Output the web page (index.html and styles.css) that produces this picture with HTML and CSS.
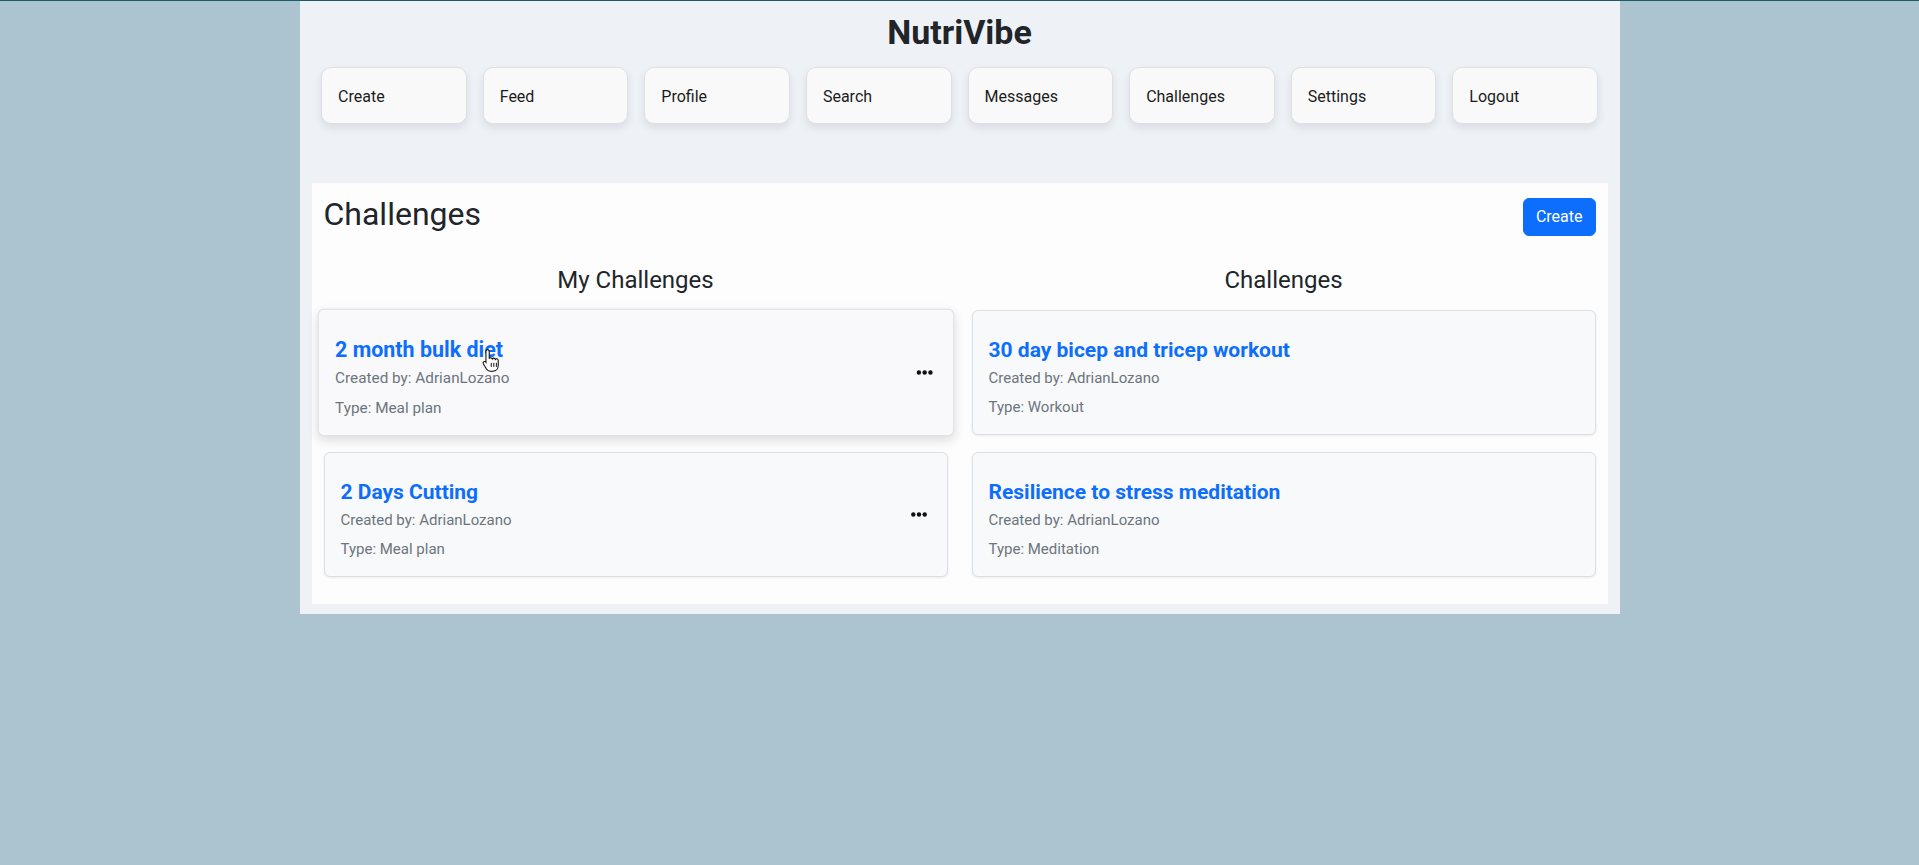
FILE: index.html
```html
<!DOCTYPE html>
<html lang="en">
<head>
<meta charset="utf-8">
<title>NutriVibe - Challenges</title>
<link rel="stylesheet" href="styles.css">
</head>
<body>
<div class="app">
  <h1 class="brand">NutriVibe</h1>
  <nav class="nav">
    <a class="nav-btn">Create</a>
    <a class="nav-btn">Feed</a>
    <a class="nav-btn">Profile</a>
    <a class="nav-btn">Search</a>
    <a class="nav-btn">Messages</a>
    <a class="nav-btn">Challenges</a>
    <a class="nav-btn">Settings</a>
    <a class="nav-btn">Logout</a>
  </nav>
  <main class="panel">
    <div class="panel-head">
      <h2 class="panel-title">Challenges</h2>
      <button class="btn-create">Create</button>
    </div>
    <div class="cols">
      <section class="col">
        <h4 class="col-title">My Challenges</h4>
        <div class="ch-card is-hover">
          <div class="ch-info">
            <h5 class="ch-name">2 month bulk diet</h5>
            <p class="ch-meta gap">Created by: AdrianLozano</p>
            <p class="ch-meta">Type: Meal plan</p>
          </div>
          <span class="dots"><svg width="16" height="5" viewBox="0 0 16 5"><circle cx="2.3" cy="2.5" r="2.2"/><circle cx="8" cy="2.5" r="2.2"/><circle cx="13.7" cy="2.5" r="2.2"/></svg></span>
          <svg class="cursor" width="18" height="24" viewBox="0 0 18 24"><path d="M5.5 1.2c.9 0 1.6.7 1.6 1.6v7.1c.3-.6.9-.9 1.5-.9.8 0 1.4.5 1.5 1.2.3-.5.8-.8 1.4-.8.8 0 1.4.6 1.5 1.3.3-.4.8-.6 1.3-.6.9 0 1.6.7 1.6 1.6v4.9c0 3.2-2.2 5.6-5.3 5.6H8.2c-1.7 0-2.9-.8-3.8-2.2L1.3 14.9c-.4-.7-.2-1.6.5-2 .6-.4 1.4-.2 1.9.3l.2.3V2.8c0-.9.7-1.6 1.6-1.6z" fill="#fff" stroke="#000" stroke-width="1"/><path d="M9.1 14v4M11.6 14v4M14.1 14v4" stroke="#000" stroke-width="0.9"/></svg>
        </div>
        <div class="ch-card">
          <div class="ch-info">
            <h5 class="ch-name">2 Days Cutting</h5>
            <p class="ch-meta gap">Created by: AdrianLozano</p>
            <p class="ch-meta">Type: Meal plan</p>
          </div>
          <span class="dots"><svg width="16" height="5" viewBox="0 0 16 5"><circle cx="2.3" cy="2.5" r="2.2"/><circle cx="8" cy="2.5" r="2.2"/><circle cx="13.7" cy="2.5" r="2.2"/></svg></span>
        </div>
      </section>
      <section class="col">
        <h4 class="col-title">Challenges</h4>
        <div class="ch-card">
          <div class="ch-info">
            <h5 class="ch-name">30 day bicep and tricep workout</h5>
            <p class="ch-meta gap">Created by: AdrianLozano</p>
            <p class="ch-meta">Type: Workout</p>
          </div>
        </div>
        <div class="ch-card">
          <div class="ch-info">
            <h5 class="ch-name">Resilience to stress meditation</h5>
            <p class="ch-meta gap">Created by: AdrianLozano</p>
            <p class="ch-meta">Type: Meditation</p>
          </div>
        </div>
      </section>
    </div>
  </main>
</div>
</body>
</html>
```
FILE: styles.css
```css
* { box-sizing: border-box; }

html, body { height: 100%; }

body {
  margin: 0;
  background: #abc4cf;
  border-top: 1px solid #1d5c67;
  font-family: Roboto, "Noto Sans", "Liberation Sans", sans-serif;
  color: #212529;
}

.app {
  width: 1320px;
  margin: 0 auto;
  background: #eef2f6;
  padding: 12px 0 10px;
}

.brand {
  margin: 0;
  text-align: center;
  font-size: 34px;
  line-height: 38.4px;
  font-weight: 700;
  color: #212529;
}

.nav {
  display: flex;
  padding: 0 13.6px;
  margin-top: 16px;
}

.nav-btn {
  flex: 1;
  margin: 0 8px;
  height: 57px;
  display: flex;
  align-items: center;
  padding: 2px 16px 0;
  background: #f9f9f9;
  border: 1px solid #dde1e5;
  border-radius: 10px;
  box-shadow: 0 4px 8px rgba(0, 0, 0, 0.09);
  font-size: 16px;
  line-height: 24px;
  color: #1c1c1c;
  text-decoration: none;
}

.panel {
  margin: 59px 12px 0;
  background: #fdfdfe;
  padding: 12px 0 10px;
}

.panel-head {
  display: flex;
  justify-content: space-between;
  align-items: flex-start;
  padding: 0 12px;
}

.panel-title {
  margin: 0;
  font-size: 32px;
  line-height: 38.4px;
  font-weight: 400;
  color: #212529;
}

.btn-create {
  margin-top: 3px;
  height: 38px;
  padding: 6px 12px;
  font-family: inherit;
  font-size: 16px;
  line-height: 24px;
  color: #fff;
  background: #0d6efd;
  border: 1px solid #0d6efd;
  border-radius: 6px;
}

.cols {
  display: grid;
  grid-template-columns: 1fr 1fr;
  margin-top: 30px;
}

.col {
  padding: 0 12px;
}

.col-title {
  margin: 0 0 15px;
  text-align: center;
  font-size: 24px;
  line-height: 28.8px;
  font-weight: 400;
  color: #212529;
}

.ch-card {
  position: relative;
  display: flex;
  align-items: center;
  justify-content: space-between;
  height: 125px;
  padding: 16px;
  margin-bottom: 17px;
  background: #f8f9fa;
  border: 1px solid #dcdfe3;
  border-radius: 6px;
  box-shadow: 0 1px 3px rgba(0, 0, 0, 0.07);
}

.ch-card.is-hover {
  transform: scale(1.02);
  background: #f9f9fb;
  box-shadow: 0 4px 10px rgba(0, 0, 0, 0.12);
}

.ch-name {
  margin: 11px 0 5px;
  font-size: 21px;
  line-height: 24px;
  font-weight: 700;
  color: #0d6efd;
}

.ch-meta {
  margin: 0;
  font-size: 15px;
  line-height: 22.5px;
  color: #6c757d;
}

.ch-meta.gap {
  margin-bottom: 6px;
}

.dots {
  display: flex;
  margin-right: 4px;
  fill: #111;
}

.cursor {
  position: absolute;
  left: 160px;
  top: 38px;
}
```
